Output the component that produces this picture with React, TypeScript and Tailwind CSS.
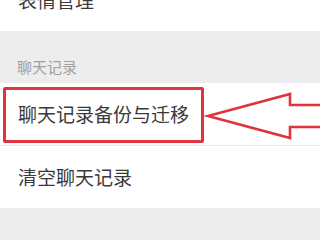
import React from 'react'

const font = { fontFamily: '"Noto Sans CJK SC", "Noto Sans", sans-serif' }

export default function App() {
    return (
        <div className="relative w-[320px] h-[240px] overflow-hidden bg-[#ededed]" style={font}>
            {/* top row, mostly scrolled off */}
            <div className="h-[31px] bg-white flex items-end pl-[18px] pb-[21px]">
                <span className="text-[19px] leading-[20px] text-[#3a3a3a]">表情管理</span>
            </div>

            {/* section header */}
            <div className="h-[52px] flex items-end pl-[17px] pb-[8px]">
                <span className="text-[15px] leading-[16px] text-[#a0a0a0]">聊天记录</span>
            </div>

            {/* section rows */}
            <div className="bg-white">
                <div className="h-[63px] flex items-center pl-[18px] border-b border-[#e8e8e8]">
                    <span className="text-[19px] leading-[20px] text-[#3a3a3a]">聊天记录备份与迁移</span>
                </div>
                <div className="h-[62px] flex items-center pl-[18px]">
                    <span className="text-[19px] leading-[20px] text-[#3a3a3a]">清空聊天记录</span>
                </div>
            </div>

            {/* annotation: red box */}
            <div className="absolute left-[3px] top-[87px] w-[201px] h-[56px] border-[3px] border-[#e0333d] rounded-[2px]" />

            {/* annotation: arrow */}
            <svg className="absolute left-0 top-0" width="320" height="240" viewBox="0 0 320 240">
                <path
                    d="M208 116 L290 94 L290 105 L324 105 L324 127 L290 127 L290 138 Z"
                    fill="none"
                    stroke="#e0333d"
                    strokeWidth="2.6"
                    strokeLinejoin="miter"
                />
            </svg>
        </div>
    )
}
